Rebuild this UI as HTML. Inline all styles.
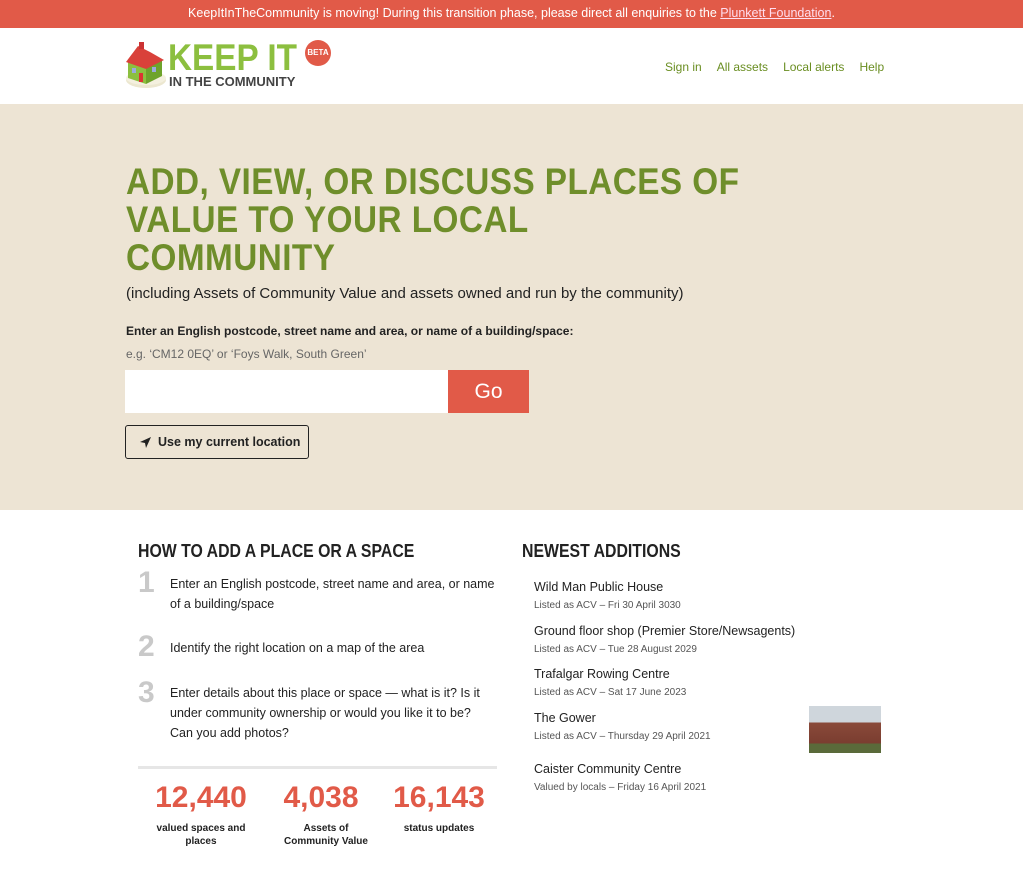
<!DOCTYPE html>
<html><head><meta charset="utf-8"><style>
*{margin:0;padding:0;box-sizing:border-box}
body{width:1023px;height:873px;overflow:hidden;font-family:"Liberation Sans",sans-serif;color:#222;background:#fff;position:relative}
.banner{height:28px;background:#e15a48;color:#fff;font-size:12.5px;text-align:center;line-height:27px}
.banner u{color:#fde}
.header{height:76px;position:relative}
.nav{position:absolute;top:32px;left:665px;font-size:12px;color:#6a8e22}
.nav span{margin-right:15px}
.hero{position:absolute;top:104px;left:0;width:1023px;height:406px;background:#ede4d4}
.h1{position:absolute;left:126px;color:#6f8e2b;font-weight:bold;font-size:37px;transform-origin:left top;white-space:nowrap;letter-spacing:0.5px;line-height:1}
.disp{font-weight:bold;white-space:nowrap;transform-origin:left top;position:absolute;line-height:1}
.abs{position:absolute}
.stat{position:absolute;color:#e15a48;font-weight:bold;font-size:30px;text-align:center;width:120px}
.sl{position:absolute;font-size:10px;font-weight:bold;text-align:center;width:120px;line-height:13px}
.num{position:absolute;left:138px;color:#c9c9c9;font-weight:bold;font-size:30px}
.st{position:absolute;left:170px;font-size:12.5px;line-height:20px;width:325px}
.it{position:absolute;left:534px;font-size:12.5px}
.it small{display:block;font-size:10px;color:#555;margin-top:6px}
</style></head><body>
<div class="banner">KeepItInTheCommunity is moving! During this transition phase, please direct all enquiries to the <u>Plunkett Foundation</u>.</div>
<div class="header">
<svg class="abs" style="left:124px;top:12px" width="44" height="50" viewBox="0 0 44 50">
<ellipse cx="22" cy="40" rx="20" ry="8" fill="#ece7d0"/><ellipse cx="22" cy="38" rx="20" ry="7" fill="#f4f0df"/>
<polygon points="4,22 22,28 22,44 4,38" fill="#8cbf3f"/><polygon points="22,28 38,20 38,36 22,44" fill="#6ea32c"/>
<polygon points="2,22 14,6 26,12 40,20 22,29" fill="#d9413a"/><rect x="15" y="2" width="5" height="7" fill="#c33"/>
<rect x="8" y="28" width="4" height="5" fill="#9ad"/><rect x="15" y="33" width="4" height="9" fill="#d33"/><rect x="28" y="27" width="4" height="5" fill="#9ad"/>
</svg>
<div class="disp" style="left:168px;top:11px;color:#8cbf3f;font-size:37px;transform:scaleX(.9)">KEEP IT</div>
<div class="disp" style="left:169px;top:47px;color:#444;font-size:13px">IN THE COMMUNITY</div>
<div class="abs" style="left:305px;top:12px;width:26px;height:26px;border-radius:50%;background:#e15a48;color:#fff;font-size:8px;font-weight:bold;text-align:center;line-height:26px">BETA</div>
<div class="nav"><span>Sign in</span><span>All assets</span><span>Local alerts</span><span>Help</span></div>
</div>
<div class="hero">
<div class="h1" style="top:59px;transform:scaleX(.9)">ADD, VIEW, OR DISCUSS PLACES OF</div>
<div class="h1" style="top:97px;transform:scaleX(.9)">VALUE TO YOUR LOCAL</div>
<div class="h1" style="top:135px;transform:scaleX(.9)">COMMUNITY</div>
<div class="abs" style="left:126px;top:181px;font-size:15px">(including Assets of Community Value and assets owned and run by the community)</div>
<div class="abs" style="left:126px;top:220px;font-size:12px;font-weight:bold">Enter an English postcode, street name and area, or name of a building/space:</div>
<div class="abs" style="left:126px;top:243px;font-size:12px;color:#666">e.g. ‘CM12 0EQ’ or ‘Foys Walk, South Green’</div>
<div class="abs" style="left:125px;top:266px;width:323px;height:43px;background:#fff"></div>
<div class="abs" style="left:448px;top:266px;width:81px;height:43px;background:#e15a48;color:#fff;font-size:21px;text-align:center;line-height:43px">Go</div>
<div class="abs" style="left:125px;top:321px;width:184px;height:34px;border:1px solid #222;border-radius:3px;font-size:12.5px;font-weight:bold;line-height:32px;padding-left:32px">Use my current location
<svg class="abs" style="left:13px;top:10px" width="13" height="13" viewBox="0 0 13 13"><polygon points="12,1 1,6 6,7 7,12" fill="#222"/></svg></div>
</div>
<div class="disp" style="left:138px;top:542px;font-size:18px;transform:scaleX(.88)">HOW TO ADD A PLACE OR A SPACE</div>
<div class="disp" style="left:522px;top:542px;font-size:18px;transform:scaleX(.88)">NEWEST ADDITIONS</div>
<div class="num" style="top:566px">1</div><div class="st" style="top:574px">Enter an English postcode, street name and area, or name of a building/space</div>
<div class="num" style="top:630px">2</div><div class="st" style="top:638px">Identify the right location on a map of the area</div>
<div class="num" style="top:676px">3</div><div class="st" style="top:683px">Enter details about this place or space — what is it? Is it under community ownership or would you like it to be? Can you add photos?</div>
<div class="abs" style="left:138px;top:766px;width:359px;height:3px;background:#e6e6e6"></div>
<div class="stat" style="left:141px;top:781px">12,440</div><div class="sl" style="left:141px;top:822px">valued spaces and places</div>
<div class="stat" style="left:261px;top:781px">4,038</div><div class="sl" style="left:266px;top:822px">Assets of<br>Community Value</div>
<div class="stat" style="left:379px;top:781px">16,143</div><div class="sl" style="left:379px;top:822px">status updates</div>
<div class="it" style="top:580px">Wild Man Public House<small>Listed as ACV – Fri 30 April 3030</small></div>
<div class="it" style="top:624px">Ground floor shop (Premier Store/Newsagents)<small>Listed as ACV – Tue 28 August 2029</small></div>
<div class="it" style="top:667px">Trafalgar Rowing Centre<small>Listed as ACV – Sat 17 June 2023</small></div>
<div class="it" style="top:711px">The Gower<small>Listed as ACV – Thursday 29 April 2021</small></div>
<div class="abs" style="left:809px;top:706px;width:72px;height:47px;background:linear-gradient(#cfd6dc 0,#cfd6dc 35%,#8a4a3a 35%,#7a3d30 80%,#5a6a3a 80%)"></div>
<div class="it" style="top:762px">Caister Community Centre<small>Valued by locals – Friday 16 April 2021</small></div>
</body></html>
